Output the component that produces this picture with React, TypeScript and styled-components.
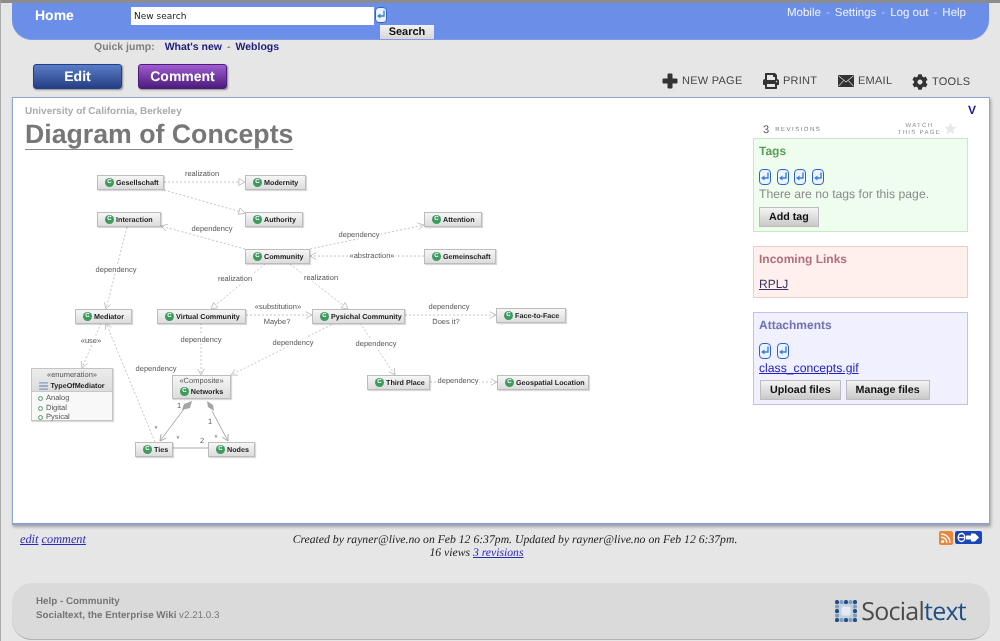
import React from "react";
import styled, { createGlobalStyle } from "styled-components";
import { FaCog, FaPrint } from "react-icons/fa";

const ORIGIN_X = 25;
const ORIGIN_Y = 160;

type NodeBox = { name: string; x: number; y: number; w: number };
type Edge = { x1: number; y1: number; x2: number; y2: number; tip?: "open" | "hollow"; solid?: boolean };
type Label = { text: string; x: number; y: number };

const nodes: NodeBox[] = [
  { name: "Gesellschaft", x: 97, y: 176, w: 67 },
  { name: "Modernity", x: 245, y: 176, w: 61 },
  { name: "Interaction", x: 97, y: 213, w: 64 },
  { name: "Authority", x: 245, y: 213, w: 58 },
  { name: "Community", x: 245, y: 250, w: 65 },
  { name: "Attention", x: 424, y: 213, w: 58 },
  { name: "Gemeinschaft", x: 424, y: 250, w: 72 },
  { name: "Mediator", x: 75, y: 310, w: 57 },
  { name: "Virtual Community", x: 157, y: 310, w: 89 },
  { name: "Pysichal Community", x: 312, y: 310, w: 93 },
  { name: "Face-to-Face", x: 496, y: 309, w: 70 },
  { name: "Ties", x: 135, y: 443, w: 38 },
  { name: "Nodes", x: 208, y: 443, w: 47 },
  { name: "Third Place", x: 367, y: 376, w: 63 },
  { name: "Geospatial Location", x: 497, y: 376, w: 92 },
];

const edges: Edge[] = [
  { x1: 164, y1: 183, x2: 245, y2: 183, tip: "hollow" },
  { x1: 164, y1: 191, x2: 245, y2: 214, tip: "hollow" },
  { x1: 245, y1: 250, x2: 161, y2: 227, tip: "open" },
  { x1: 127, y1: 228, x2: 106, y2: 310, tip: "open" },
  { x1: 310, y1: 250, x2: 424, y2: 226, tip: "open" },
  { x1: 424, y1: 257, x2: 310, y2: 257, tip: "open" },
  { x1: 265, y1: 265, x2: 211, y2: 310, tip: "hollow" },
  { x1: 290, y1: 265, x2: 348, y2: 310, tip: "hollow" },
  { x1: 246, y1: 316, x2: 312, y2: 316, tip: "open" },
  { x1: 405, y1: 316, x2: 496, y2: 316, tip: "open" },
  { x1: 101, y1: 324, x2: 82, y2: 369, tip: "open" },
  { x1: 155, y1: 443, x2: 106, y2: 324, tip: "open" },
  { x1: 201, y1: 324, x2: 201, y2: 376, tip: "open" },
  { x1: 335, y1: 324, x2: 231, y2: 376, tip: "open" },
  { x1: 360, y1: 324, x2: 395, y2: 376, tip: "open" },
  { x1: 430, y1: 383, x2: 497, y2: 383, tip: "open" },
  { x1: 184, y1: 410, x2: 160, y2: 442, tip: "open", solid: true },
  { x1: 212, y1: 412, x2: 228, y2: 442, tip: "open", solid: true },
  { x1: 173, y1: 449, x2: 208, y2: 449, solid: true },
];

const labels: Label[] = [
  { text: "realization", x: 202, y: 174 },
  { text: "dependency", x: 212, y: 229 },
  { text: "dependency", x: 116, y: 270 },
  { text: "realization", x: 235, y: 279 },
  { text: "realization", x: 321, y: 278 },
  { text: "dependency", x: 359, y: 235 },
  { text: "«abstraction»", x: 372, y: 256 },
  { text: "«substitution»", x: 278, y: 307 },
  { text: "Maybe?", x: 277, y: 322 },
  { text: "dependency", x: 449, y: 307 },
  { text: "Does it?", x: 446, y: 322 },
  { text: "«use»", x: 91, y: 341 },
  { text: "dependency", x: 156, y: 369 },
  { text: "dependency", x: 201, y: 340 },
  { text: "dependency", x: 293, y: 343 },
  { text: "dependency", x: 376, y: 344 },
  { text: "dependency", x: 458, y: 381 },
  { text: "1", x: 179, y: 406 },
  { text: "*", x: 156, y: 429 },
  { text: "*", x: 178, y: 439 },
  { text: "2", x: 202, y: 441 },
  { text: "*", x: 216, y: 438 },
  { text: "1", x: 210, y: 422 },
];

function arrowHead(e: Edge) {
  const a = Math.atan2(e.y2 - e.y1, e.x2 - e.x1);
  const len = 7;
  const spread = 0.5;
  const p1 = `${e.x2 - len * Math.cos(a - spread)},${e.y2 - len * Math.sin(a - spread)}`;
  const p2 = `${e.x2 - len * Math.cos(a + spread)},${e.y2 - len * Math.sin(a + spread)}`;
  return `${p1} ${e.x2},${e.y2} ${p2}`;
}

function ReturnIcon() {
  return (
    <svg width="12" height="16" viewBox="0 0 12 16">
      <rect x="0.5" y="0.5" width="11" height="15" rx="3.5" fill="#eaf3ff" stroke="#2f62c8" />
      <path d="M9 3.5V9H4" fill="none" stroke="#3f7fd8" strokeWidth="1.4" />
      <path d="M5.5 6.5L2 9L5.5 11.5Z" fill="#3f7fd8" />
    </svg>
  );
}

function CrossIcon() {
  return (
    <svg width="16" height="16" viewBox="0 0 16 16">
      <path d="M5.5 1.5Q5.5 0.5 6.5 0.5H9.5Q10.5 0.5 10.5 1.5V5.5H14.5Q15.5 5.5 15.5 6.5V9.5Q15.5 10.5 14.5 10.5H10.5V14.5Q10.5 15.5 9.5 15.5H6.5Q5.5 15.5 5.5 14.5V10.5H1.5Q0.5 10.5 0.5 9.5V6.5Q0.5 5.5 1.5 5.5H5.5Z" fill="#333" />
    </svg>
  );
}

function MailIcon() {
  return (
    <svg width="16" height="12" viewBox="0 0 16 12">
      <rect width="16" height="12" fill="#333" />
      <path d="M0.5 0.8L8 7L15.5 0.8M0.5 11.2L5.8 5.4M15.5 11.2L10.2 5.4" fill="none" stroke="#ddd" strokeWidth="0.9" />
    </svg>
  );
}

function StarIcon() {
  return (
    <svg width="13" height="13" viewBox="0 0 24 24">
      <path d="M12 1l3.4 7.3 7.6.9-5.6 5.400 1.500 7.900L12 18.600 5.100 22.500l1.500-7.900L1 9.200l7.600-.9z" fill="#e8e8e8" />
    </svg>
  );
}

function RssIcon() {
  return (
    <svg width="14" height="14" viewBox="0 0 14 14">
      <rect width="14" height="14" rx="2" fill="#e8863a" />
      <circle cx="3.600" cy="10.400" r="1.500" fill="#fff" />
      <path d="M2.200 6.200A5.600 5.600 0 0 1 7.800 11.800M2.200 3A8.800 8.800 0 0 1 11 11.800" fill="none" stroke="#fff" strokeWidth="1.500" />
    </svg>
  );
}

function PlugIcon() {
  return (
    <svg width="27" height="13" viewBox="0 0 27 13">
      <rect width="27" height="13" rx="2" fill="#1c46b8" />
      <ellipse cx="6.500" cy="6.500" rx="3.300" ry="4" fill="none" stroke="#fff" strokeWidth="1.400" />
      <path d="M3.500 6.500H9.500" stroke="#fff" strokeWidth="1.200" />
      <path d="M11 4.500H16V2.500H20L24 6.500L20 10.500H16V8.500H11Z" fill="#fff" />
    </svg>
  );
}

function LogoMark() {
  const dots: [number, number, string][] = [];
  for (let row = 0; row < 5; row++) {
    for (let col = 0; col < 5; col++) {
      const ring = row === 0 || row === 4 || col === 0 || col === 4;
      if (!ring) continue;
      const dark = (row + col) % 2 === 0;
      dots.push([col * 4.500 + 2, row * 4.500 + 2, dark ? "#1f4e85" : "#7f9dc0"]);
    }
  }
  return (
    <svg width="22" height="22" viewBox="0 0 22 22">
      <rect x="2" y="2" width="18" height="18" rx="3" fill="#c3d0e0" />
      {dots.map(([cx, cy, fill], i) => (
        <rect key={i} x={cx - 2} y={cy - 2} width="4" height="4" rx="1.500" fill={fill} />
      ))}
      <rect x="6.500" y="6.500" width="9" height="9" rx="2" fill="#e4eaf1" />
    </svg>
  );
}

function App() {
  return (
    <Page>
      <GlobalStyle />
      <Header>
        <HomeLink>Home</HomeLink>
        <SearchGroup>
          <SearchInput readOnly value="New search" />
          <ReturnSlot>
            <ReturnIcon />
          </ReturnSlot>
          <SearchButton>Search</SearchButton>
        </SearchGroup>
        <NavLinks>
          <a>Mobile</a>
          <i>-</i>
          <a>Settings</a>
          <i>-</i>
          <a>Log out</a>
          <i>-</i>
          <a>Help</a>
        </NavLinks>
      </Header>

      <QuickJump>
        <QuickLabel>Quick jump:</QuickLabel>
        <a>What's new</a>
        <span>-</span>
        <a>Weblogs</a>
      </QuickJump>

      <ActionRow>
        <ActionButton $top="#5a7cc8" $bottom="#253f84">Edit</ActionButton>
        <ActionButton $top="#a05cd0" $bottom="#4c1c7c">Comment</ActionButton>
        <Tools>
          <Tool $width={81}>
            <CrossIcon />
            NEW PAGE
          </Tool>
          <Tool $width={55}>
            <FaPrint size={16} color="#333" />
            PRINT
          </Tool>
          <Tool $width={54}>
            <MailIcon />
            EMAIL
          </Tool>
          <Tool $width={59} $drop={1}>
            <FaCog size={16} color="#333" />
            TOOLS
          </Tool>
        </Tools>
      </ActionRow>

      <Content>
        <Main>
          <Crumb>University of California, Berkeley</Crumb>
          <Title>Diagram of Concepts</Title>
          <Canvas>
            <Wires viewBox={`${ORIGIN_X} ${ORIGIN_Y} 575 320`}>
              {edges.map((e, i) => (
                <g key={i} fill="none" stroke={e.solid ? "#aaa" : "#c4c4c4"} strokeWidth="1">
                  <line x1={e.x1} y1={e.y1} x2={e.x2} y2={e.y2} strokeDasharray={e.solid ? undefined : "2 2"} />
                  {e.tip === "open" && <polyline points={arrowHead(e)} />}
                  {e.tip === "hollow" && <polygon points={arrowHead(e)} fill="#fff" />}
                </g>
              ))}
              <polygon points="192,402 190,409 182,411 184,405" fill="#a5a5a5" />
              <polygon points="207,402 213,406 214,412 208,408" fill="#a5a5a5" />
            </Wires>
            {labels.map((l, i) => (
              <EdgeLabel key={i} $x={l.x - ORIGIN_X} $y={l.y - ORIGIN_Y}>
                {l.text}
              </EdgeLabel>
            ))}
            {nodes.map((n) => (
              <ClassNode key={n.name} $x={n.x - ORIGIN_X} $y={n.y - ORIGIN_Y} $w={n.w}>
                <ClassBadge>C</ClassBadge>
                {n.name}
              </ClassNode>
            ))}
            <CompositeNode>
              <Stereotype>«Composite»</Stereotype>
              <NodeName>
                <ClassBadge>C</ClassBadge>
                Networks
              </NodeName>
            </CompositeNode>
            <EnumNode>
              <EnumHead>
                <Stereotype>«enumeration»</Stereotype>
                <NodeName>
                  <svg width="9" height="8" viewBox="0 0 10 9">
                    <path d="M0 1H10M0 4.500H10M0 8H10" stroke="#7f9bc7" strokeWidth="1.500" />
                  </svg>
                  TypeOfMediator
                </NodeName>
              </EnumHead>
              <EnumItem>Analog</EnumItem>
              <EnumItem>Digital</EnumItem>
              <EnumItem>Pysical</EnumItem>
            </EnumNode>
          </Canvas>
        </Main>

        <Sidebar>
          <Corner>V</Corner>
          <RevisionRow>
            <Revisions>
              <b>3</b>
              <span>REVISIONS</span>
            </Revisions>
            <Watch>
              <span>
                WATCH
                <br />
                THIS PAGE
              </span>
              <StarIcon />
            </Watch>
          </RevisionRow>
          <Box $bg="#eefdee" $line="#c5eac5" $height={94}>
            <BoxTitle $color="#5c9a5c">Tags</BoxTitle>
            <IconRow $gap={5.5}>
              <ReturnIcon />
              <ReturnIcon />
              <ReturnIcon />
              <ReturnIcon />
            </IconRow>
            <BoxText>There are no tags for this page.</BoxText>
            <GrayButton>Add tag</GrayButton>
          </Box>
          <Box $bg="#fff0ee" $line="#eccdc8" $height={52}>
            <BoxTitle $color="#b0707c">Incoming Links</BoxTitle>
            <PlainLink>RPLJ</PlainLink>
          </Box>
          <Box $bg="#f0f0ff" $line="#c2c2e8" $height={93}>
            <BoxTitle $color="#7272b4">Attachments</BoxTitle>
            <IconRow $gap={6}>
              <ReturnIcon />
              <ReturnIcon />
            </IconRow>
            <FileLink>class_concepts.gif</FileLink>
            <ButtonRow>
              <GrayButton>Upload files</GrayButton>
              <GrayButton>Manage files</GrayButton>
            </ButtonRow>
          </Box>
        </Sidebar>
      </Content>

      <PageInfo>
        <InfoLinks>
          <a>edit</a> <a>comment</a>
        </InfoLinks>
        <InfoText>
          Created by rayner@live.no on Feb 12 6:37pm. Updated by rayner@live.no on Feb 12 6:37pm.
          <ViewsLine>
            16 views <a>3 revisions</a>
          </ViewsLine>
        </InfoText>
        <Feeds>
          <RssIcon />
          <PlugIcon />
        </Feeds>
      </PageInfo>

      <Footer>
        <FooterText>
          <div>Help - Community</div>
          <div>
            Socialtext, the Enterprise Wiki <small>v2.21.0.3</small>
          </div>
        </FooterText>
        <Logo>
          <LogoMark />
          <span>
            Social<b>text</b>
          </span>
        </Logo>
      </Footer>
    </Page>
  );
}

export default App;

const GlobalStyle = createGlobalStyle`
  html, body {
    margin: 0;
    padding: 0;
    background: #e6e6e6;
  }
`;

const Page = styled.div`
  width: 1000px;
  height: 641px;
  box-sizing: border-box;
  overflow: hidden;
  background: #e6e6e6;
  border-top: 3px solid #8c8c8c;
  border-left: 1px solid #ababab;
  font-family: "Liberation Sans", Arial, sans-serif;
  text-rendering: geometricPrecision;
  filter: blur(0.4px);
`;

const Header = styled.header`
  margin: 0 11px;
  height: 37px;
  box-sizing: border-box;
  padding-left: 23px;
  display: flex;
  background: #6b8fe8;
  border-radius: 0 0 20px 20px;
  border-bottom: 1px solid #7f9be4;
`;

const HomeLink = styled.a`
  width: 96px;
  padding-top: 4px;
  color: #fff;
  font-size: 14px;
  font-weight: bold;
`;

const SearchGroup = styled.div`
  width: 303px;
  padding-top: 4px;
  display: grid;
  grid-template-columns: 243px 60px;
  grid-template-rows: 18px 14px;
`;

const SearchInput = styled.input`
  width: 243px;
  height: 18px;
  box-sizing: border-box;
  border: none;
  padding: 0 3px;
  background: #fff;
  color: #222;
  font-family: "DejaVu Sans", sans-serif;
  font-size: 9px;
`;

const ReturnSlot = styled.span`
  padding-left: 1px;
`;

const SearchButton = styled.div`
  grid-column: 2;
  grid-row: 2;
  width: 54px;
  height: 14px;
  margin-left: 6px;
  background: linear-gradient(#f2f2f2, #d6d6d6);
  color: #111;
  font-size: 11px;
  font-weight: bold;
  line-height: 14px;
  text-align: center;
`;

const NavLinks = styled.nav`
  margin-left: auto;
  padding: 3px 23px 0 0;
  display: flex;
  gap: 5px;
  color: #f0f4ff;
  font-size: 11.5px;
  line-height: 14px;

  i {
    font-style: normal;
    color: #b9caf3;
  }
`;

const QuickJump = styled.div`
  height: 14px;
  padding-left: 93px;
  display: flex;
  gap: 5px;
  align-items: center;
  color: #808080;
  font-size: 10.5px;
  font-weight: bold;

  a {
    color: #1d1a7a;
  }
`;

const QuickLabel = styled.span`
  margin-right: 5px;
`;

const ActionRow = styled.div`
  margin-top: 10px;
  padding: 0 29px 0 32px;
  display: flex;
  gap: 16px;
  height: 25px;
`;

const ActionButton = styled.div<{ $top: string; $bottom: string }>`
  width: 89px;
  height: 25px;
  box-sizing: border-box;
  border: 1px solid ${({ $bottom }) => $bottom};
  border-radius: 3px;
  background: linear-gradient(${({ $top }) => $top}, ${({ $bottom }) => $bottom});
  box-shadow: 1px 1px 2px rgba(0, 0, 0, 0.4);
  color: #fff;
  font-size: 14px;
  font-weight: bold;
  line-height: 22px;
  text-align: center;
`;

const Tools = styled.div`
  margin-left: auto;
  padding-top: 9px;
  display: flex;
  gap: 20px;
`;

const Tool = styled.div<{ $width: number; $drop?: number }>`
  width: ${({ $width }) => $width}px;
  height: 16px;
  display: flex;
  align-items: center;
  gap: 4px;
  white-space: nowrap;
  color: #444;
  font-size: 11px;
  letter-spacing: 0.25px;
  margin-top: ${({ $drop }) => $drop ?? 0}px;

  svg {
    flex: none;
  }
`;

const Content = styled.main`
  margin: 8px 10px 0 11px;
  height: 428px;
  box-sizing: border-box;
  display: flex;
  justify-content: space-between;
  background: #fff;
  border: 1px solid #8fa6dd;
  border-bottom: 2px solid #8f9fd0;
  box-shadow: 1px 2px 3px rgba(0, 0, 0, 0.3);
`;

const Main = styled.section`
  padding: 7px 0 0 12px;
  width: 600px;
`;

const Crumb = styled.div`
  color: #ababab;
  font-size: 10px;
  font-weight: bold;
  line-height: 13px;
`;

const Title = styled.h1`
  display: inline-block;
  margin: 1px 0 0;
  border-bottom: 1px solid #888;
  color: #777;
  font-size: 26.7px;
  font-weight: bold;
  line-height: 30px;
`;

const Canvas = styled.div`
  position: relative;
  width: 575px;
  height: 320px;
  margin-top: 9px;
`;

const Wires = styled.svg`
  position: absolute;
  inset: 0;
  width: 575px;
  height: 320px;
`;

const EdgeLabel = styled.span<{ $x: number; $y: number }>`
  position: absolute;
  left: ${({ $x }) => $x}px;
  top: ${({ $y }) => $y}px;
  transform: translate(-50%, -50%);
  padding: 0 1px;
  background: #fff;
  white-space: nowrap;
  color: #555;
  font-size: 7.5px;
`;

const ClassNode = styled.div<{ $x: number; $y: number; $w: number }>`
  position: absolute;
  left: ${({ $x }) => $x}px;
  top: ${({ $y }) => $y}px;
  width: ${({ $w }) => $w}px;
  height: 15px;
  box-sizing: border-box;
  padding-left: 7px;
  display: flex;
  align-items: center;
  gap: 2px;
  white-space: nowrap;
  border: 1px solid #bcbcbc;
  background: linear-gradient(#f6f6f6, #dcdcdc);
  box-shadow: 1px 1px 1px rgba(0, 0, 0, 0.15);
  color: #222;
  font-size: 7.2px;
  font-weight: bold;
`;

const ClassBadge = styled.span`
  width: 9px;
  height: 9px;
  flex: none;
  border-radius: 50%;
  background: #3f9a5f;
  color: #fff;
  font-size: 6px;
  line-height: 9px;
  text-align: center;
`;

const CompositeNode = styled.div`
  position: absolute;
  left: 147px;
  top: 216px;
  width: 59px;
  height: 24px;
  box-sizing: border-box;
  border: 1px solid #bcbcbc;
  background: linear-gradient(#f6f6f6, #dcdcdc);
  box-shadow: 1px 1px 1px rgba(0, 0, 0, 0.15);
  text-align: center;
`;

const Stereotype = styled.div`
  color: #555;
  font-size: 7.5px;
  line-height: 10px;
`;

const NodeName = styled.div`
  display: flex;
  justify-content: center;
  align-items: center;
  gap: 2px;
  color: #222;
  font-size: 7.2px;
  font-weight: bold;
  line-height: 11px;
`;

const EnumNode = styled.div`
  position: absolute;
  left: 6px;
  top: 209px;
  width: 82px;
  height: 53px;
  box-sizing: border-box;
  border: 1px solid #c4c4c4;
  background: #f8f8f8;
  box-shadow: 1px 1px 1px rgba(0, 0, 0, 0.15);
`;

const EnumHead = styled.div`
  height: 23px;
  box-sizing: border-box;
  padding-top: 1px;
  margin-bottom: 1px;
  text-align: center;
  background: linear-gradient(#ececec, #dcdcdc);
  border-bottom: 1px solid #c8c8c8;
`;

const EnumItem = styled.div`
  padding-left: 14px;
  position: relative;
  color: #555;
  font-size: 7.5px;
  line-height: 9.5px;

  &::before {
    content: "";
    position: absolute;
    left: 6px;
    top: 3px;
    width: 3px;
    height: 3px;
    border: 1px solid #4d9a6d;
    border-radius: 50%;
  }
`;

const Sidebar = styled.aside`
  width: 215px;
  margin-right: 21px;
  display: flex;
  flex-direction: column;
`;

const Corner = styled.div`
  align-self: flex-end;
  margin: 5px -8px 0 0;
  height: 15px;
  color: #1c1a96;
  font-size: 12px;
  font-weight: bold;
  line-height: 15px;
`;

const RevisionRow = styled.div`
  height: 20px;
  padding: 0 11px 0 10px;
  display: flex;
  justify-content: space-between;
  align-items: flex-end;
`;

const Revisions = styled.div`
  display: flex;
  align-items: center;
  gap: 6px;
  height: 15px;
  padding-bottom: 1px;
  color: #777;

  b {
    color: #555;
    font-size: 11px;
    font-weight: normal;
  }

  span {
    font-size: 6px;
    letter-spacing: 1.5px;
  }
`;

const Watch = styled.div`
  display: flex;
  align-items: flex-end;
  gap: 3px;
  height: 15px;
  padding-bottom: 1px;
  color: #8b8b8b;
  font-size: 6px;
  letter-spacing: 1.3px;
  line-height: 7px;
  text-align: center;

  svg {
    margin-bottom: 2px;
  }
`;

const Box = styled.div<{ $bg: string; $line: string; $height: number }>`
  height: ${({ $height }) => $height}px;
  box-sizing: border-box;
  margin-bottom: 14px;
  padding: 5px 5px 0;
  background: ${({ $bg }) => $bg};
  border: 1px solid ${({ $line }) => $line};
`;

const BoxTitle = styled.div<{ $color: string }>`
  color: ${({ $color }) => $color};
  font-size: 12px;
  font-weight: bold;
  line-height: 14px;
  margin-bottom: 11px;
`;

const IconRow = styled.div<{ $gap: number }>`
  display: flex;
  gap: ${({ $gap }) => $gap}px;
  height: 16px;
  margin-bottom: 2px;
`;

const BoxText = styled.div`
  color: #8a8a8a;
  font-size: 12.2px;
  line-height: 15px;
  margin-bottom: 5px;
`;

const GrayButton = styled.div`
  display: inline-block;
  box-sizing: border-box;
  padding: 0 9px;
  height: 20px;
  background: linear-gradient(#f4f4f4, #c9c9c9);
  border: 1px solid #bdbdbd;
  color: #111;
  font-size: 10.7px;
  font-weight: bold;
  line-height: 18px;
`;

const PlainLink = styled.a`
  display: block;
  color: #34346a;
  font-size: 12px;
  line-height: 14px;
  text-decoration: underline;
`;

const FileLink = styled.a`
  display: block;
  color: #2222c0;
  font-size: 12.2px;
  line-height: 14px;
  text-decoration: underline;
`;

const ButtonRow = styled.div`
  display: flex;
  gap: 5px;
  margin: 5px 0 0 1px;
`;

const PageInfo = styled.div`
  margin: 0 18px 0 19px;
  height: 25px;
  padding-top: 8px;
  display: flex;
  font-family: "Liberation Serif", serif;
  font-style: italic;
  font-size: 11.7px;
  line-height: 13px;
  color: #222;

  a {
    color: #2a2ab8;
    text-decoration: underline;
  }
`;

const InfoLinks = styled.div`
  width: 272px;
  font-size: 12.3px;
`;

const InfoText = styled.div`
  width: 446px;
  text-align: center;
  white-space: nowrap;
`;

const ViewsLine = styled.div`
  margin-right: 77px;
`;

const Feeds = styled.div`
  margin: -2px 0 0 auto;
  display: flex;
  gap: 2px;
`;

const Footer = styled.footer`
  margin: 25px 10px 0 11px;
  height: 57px;
  box-sizing: border-box;
  padding: 12px 24px 0 23px;
  display: flex;
  justify-content: space-between;
  background: #dadada;
  border-radius: 20px;
  border-bottom: 1px solid #b2b2b2;
`;

const FooterText = styled.div`
  padding-left: 1px;
  color: #777;
  font-size: 9.8px;
  font-weight: bold;
  line-height: 14px;

  small {
    font-size: 9.8px;
    font-weight: normal;
  }
`;

const Logo = styled.div`
  display: flex;
  align-items: center;
  gap: 4px;
  height: 32px;
  color: #4b4b4b;
  font-family: "Open Sans", sans-serif;
  font-size: 25px;
  letter-spacing: -0.75px;

  b {
    color: #1f4e85;
    font-weight: normal;
  }

  svg {
    flex: none;
  }
`;
